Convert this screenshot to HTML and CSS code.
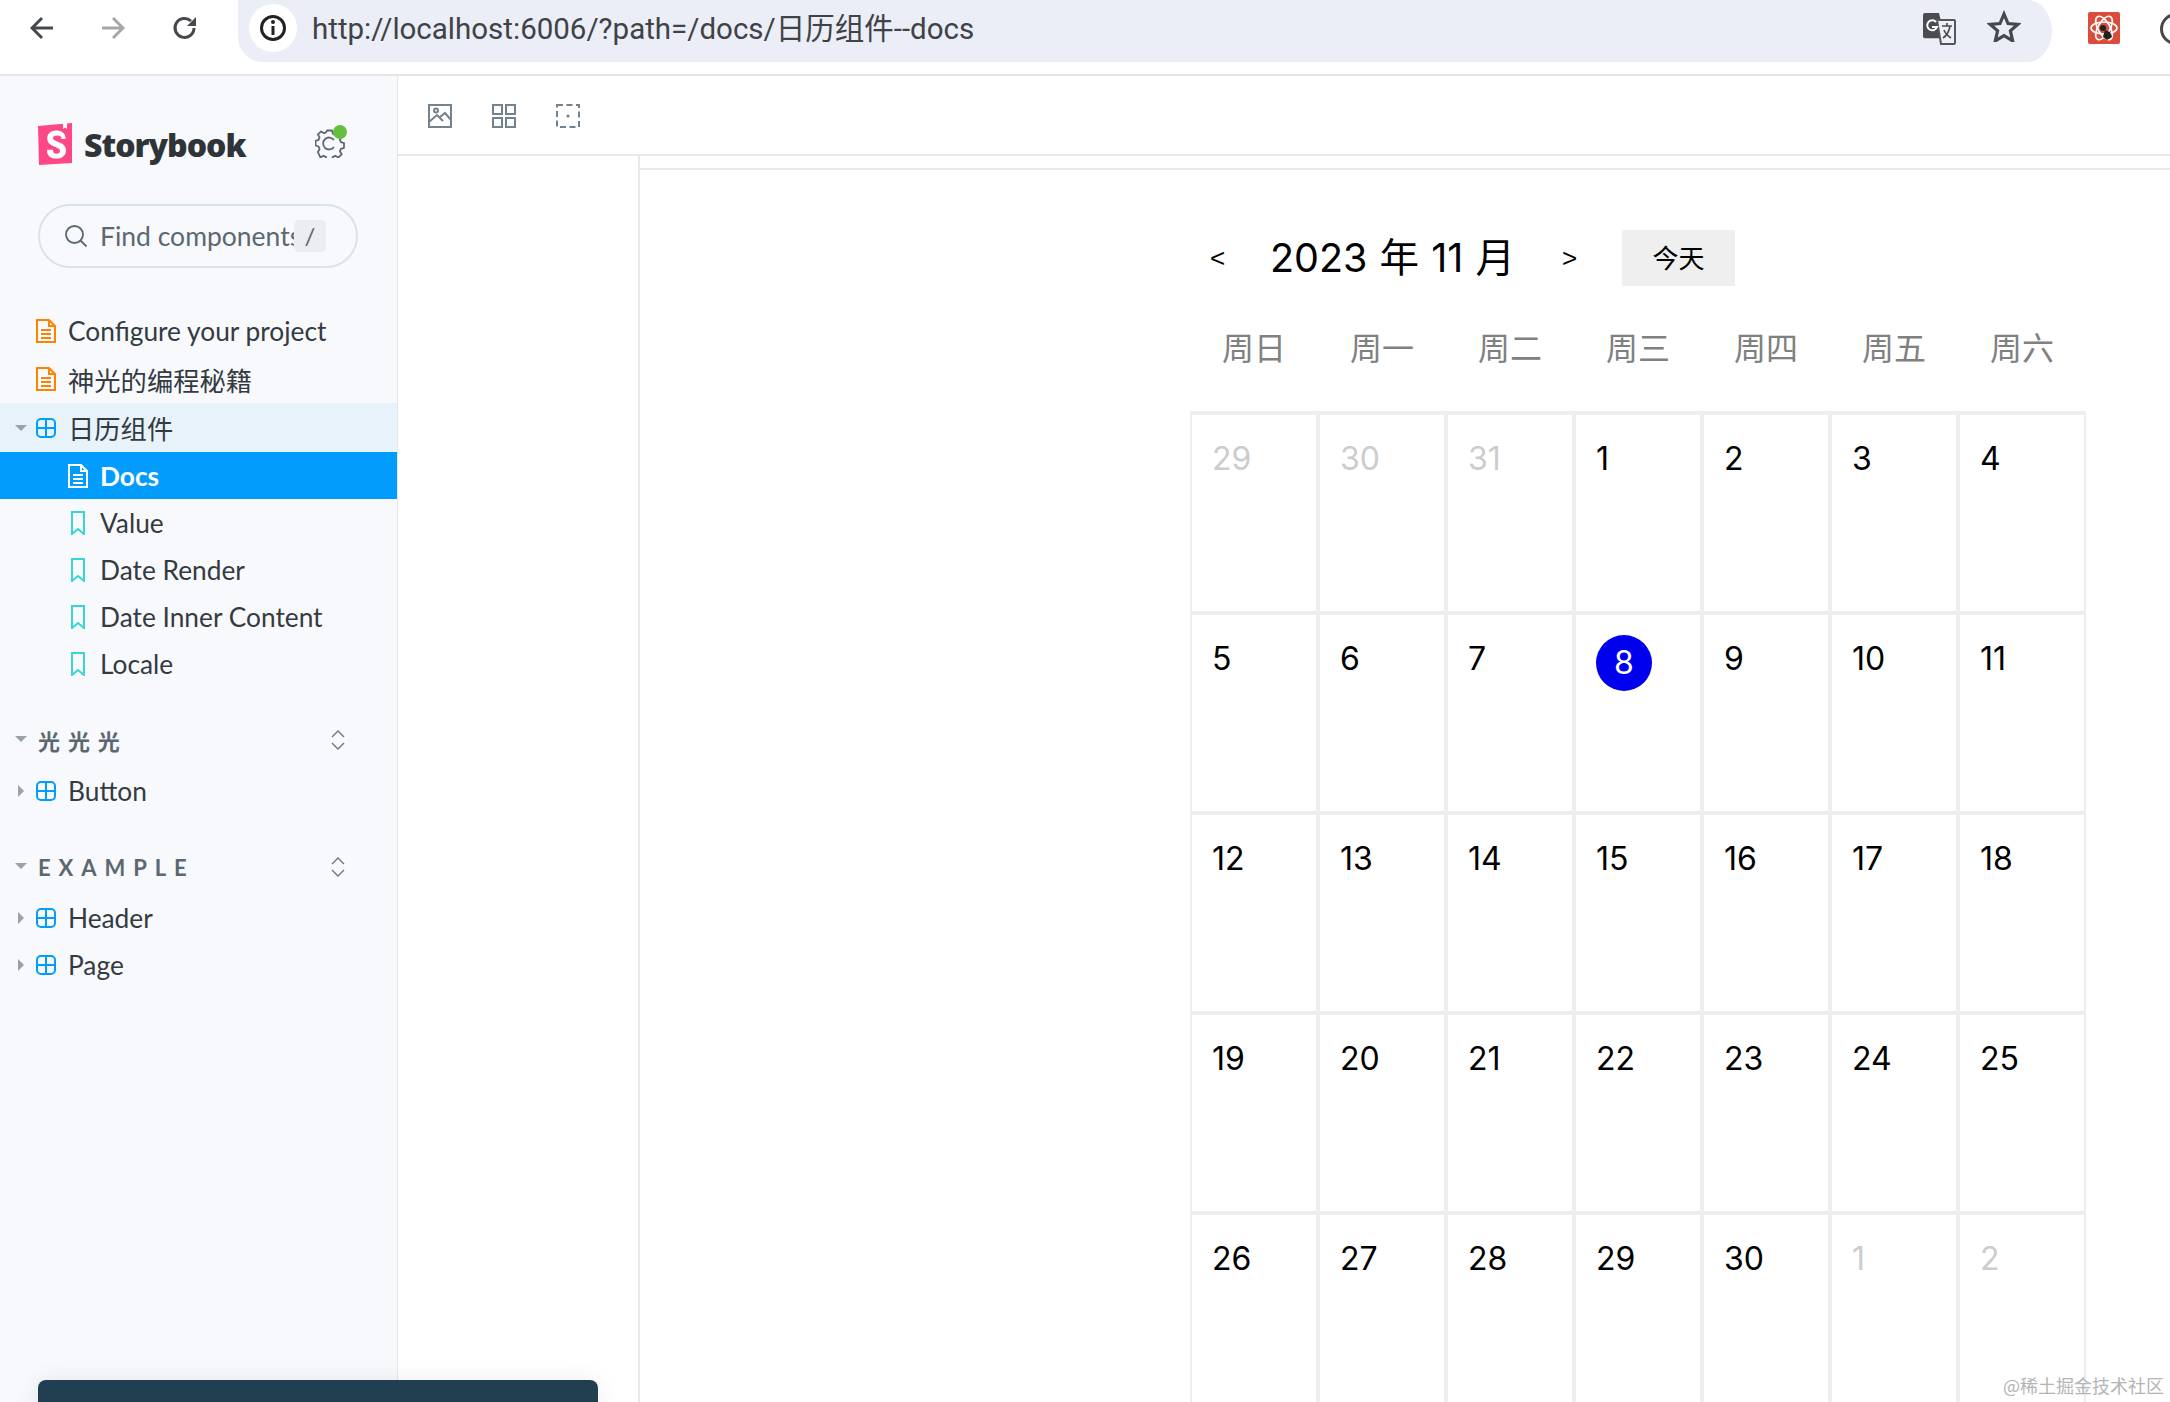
FILE: index.html
```html
<!DOCTYPE html>
<html lang="zh-CN">
<head>
  <meta charset="UTF-8">
  <title>日历组件 - Docs - Storybook</title>
  <link rel="stylesheet" href="styles.css">
</head>
<body>
  <svg class="sprites" width="0" height="0">
    <symbol id="i-doc" viewBox="0 0 20 24">
      <path d="M1 1h12l6 6v16H1z M13 1v6h6" fill="none" stroke="currentColor" stroke-width="2"/>
      <path d="M5 11h10M5 15h10M5 19h10" fill="none" stroke="currentColor" stroke-width="2"/>
    </symbol>
    <symbol id="i-component" viewBox="0 0 20 20">
      <rect x="1" y="1" width="18" height="18" rx="4" fill="none" stroke="currentColor" stroke-width="2"/>
      <path d="M10 1v18M1 10h18" fill="none" stroke="currentColor" stroke-width="2"/>
    </symbol>
    <symbol id="i-story" viewBox="0 0 14 24">
      <path d="M1 1h12v22l-6-5-6 5z" fill="none" stroke="currentColor" stroke-width="2"/>
    </symbol>
    <symbol id="i-expand" viewBox="0 0 14 20">
      <path d="M1 7l6-6 6 6M1 13l6 6 6-6" fill="none" stroke="currentColor" stroke-width="1.4"/>
    </symbol>
  </svg>

  <!-- browser chrome -->
  <header class="browser-bar">
    <svg class="nav-icon" width="24" height="24" viewBox="0 0 24 24"><path d="M23 12H3M12 2L2 12l10 10" fill="none" stroke="#45484c" stroke-width="3"/></svg>
    <svg class="nav-icon nav-off" width="24" height="24" viewBox="0 0 24 24"><path d="M1 12h20M12 2l10 10-10 10" fill="none" stroke="#a5a7aa" stroke-width="3"/></svg>
    <svg class="nav-icon" width="26" height="26" viewBox="0 0 26 26"><path d="M22 13a9.500 9.500 0 1 1-3-7" fill="none" stroke="#45484c" stroke-width="3"/><path d="M24 2v9h-9z" fill="#45484c"/></svg>
    <div class="url-pill">
      <span class="site-info">
        <svg width="28" height="28" viewBox="0 0 28 28"><circle cx="14" cy="14" r="11.500" fill="none" stroke="#222" stroke-width="3"/><path d="M14 12v9" stroke="#222" stroke-width="3"/><circle cx="14" cy="8" r="2" fill="#222"/></svg>
      </span>
      <span class="url-text">http://localhost:6006/?path=/docs/日历组件--docs</span>
      <svg class="translate-icon" width="34" height="32" viewBox="0 0 34 32">
        <path d="M1 2a2 2 0 0 1 2-2h14l6 30H3a2 2 0 0 1-2-2z" fill="#4a4c4f" transform="scale(1 .84)"/>
        <path d="M15 7h17a1 1 0 0 1 1 1v22a1 1 0 0 1-1 1H19z" fill="#eef0f5" stroke="#55585b" stroke-width="2"/>
        <path d="M14 9a5 5 0 1 0 1 5h-5" fill="none" stroke="#fff" stroke-width="2"/>
        <path d="M20 13h10M25 10v3M28 13c-1 6-4 10-7 12M22 17c1 3 4 6 7 8" fill="none" stroke="#4a4c4f" stroke-width="1.600"/>
      </svg>
      <svg class="star-icon" width="34" height="32" viewBox="0 0 34 32"><path d="M17 4l4 9.500 10 .8-7.600 6.600 2.300 10L17 25.700 8.300 30.900l2.300-10L3 14.300l10-.8z" fill="none" stroke="#45484c" stroke-width="3.200"/></svg>
    </div>
    <span class="ext-icon">
      <svg width="32" height="32" viewBox="0 0 32 32">
        <g fill="none" stroke="#fff" stroke-width="1.600"><ellipse cx="16" cy="16" rx="13" ry="6"/><ellipse cx="16" cy="16" rx="13" ry="6" transform="rotate(60 16 16)"/><ellipse cx="16" cy="16" rx="13" ry="6" transform="rotate(120 16 16)"/></g>
        <circle cx="15" cy="16" r="3" fill="#222"/><path d="M17 18l5 2 2 5-5 3-4-3z" fill="#222"/>
      </svg>
    </span>
    <span class="profile-icon"></span>
  </header>

  <div class="app">
    <aside class="sidebar">
      <div class="brand">
        <svg class="logo" width="34" height="42" viewBox="0 0 34 42">
          <path d="M0 3L34 0l0 40-33 2z" fill="#ff4785"/>
          <path d="M25 0l0 6 2-1.500 2 1.500V0z" fill="#fff"/>
          <path d="M23.500 16c0-2.500-1.500-3.600-4.500-3.600s-4 1.300-4 2.800c0 4 13 3 13 12 0 5.500-4.500 8.500-9.500 8.500-5.500 0-10-2.700-9.500-9l6 0c0 3 1.300 4 3.500 4 2.300 0 3.500-1 3.500-3 0-4.500-12.800-3.500-12.800-12.300 0-5 4-7.800 9-7.800s9.500 2.500 9.500 8.400z" fill="#fff"/>
        </svg>
        <span class="brand-name">Storybook</span>
        <span class="status">
          <svg width="30" height="30" viewBox="0 0 30 30"><path d="M12 2.500h5l1 3.500 2.500 1 3.200-1.800 3 3.500-1.800 3 1 2.500 3.100 1v4.600l-3.100 1-1 2.500 1.800 3-3.400 3.200-3-1.700-2.500 1-1 3.200h-5l-.9-3.200-2.500-1-3 1.700L2.900 24l1.700-3-1-2.500-3.100-1v-4.600l3.100-1 1-2.500-1.700-3L6.200 3.400l3 1.800 2-1z" fill="none" stroke="#5c6870" stroke-width="1.800" stroke-linejoin="round"/><path d="M19 12a6 6 0 1 0 0 7" fill="none" stroke="#5c6870" stroke-width="1.800"/></svg>
          <i class="status-dot"></i>
        </span>
      </div>

      <div class="search">
        <svg width="24" height="24" viewBox="0 0 24 24"><circle cx="10.500" cy="10.500" r="8.500" fill="none" stroke="#5c6870" stroke-width="1.800"/><path d="M16.500 16.500l6 6" stroke="#5c6870" stroke-width="1.800"/></svg>
        <span class="search-text">Find components</span>
        <kbd class="search-key">/</kbd>
      </div>

      <nav class="tree">
        <a class="row row-top"><svg class="ico ico-doc"><use href="#i-doc"/></svg>Configure your project</a>
        <a class="row row-top"><svg class="ico ico-doc"><use href="#i-doc"/></svg>神光的编程秘籍</a>
        <a class="row row-open"><i class="caret caret-down"></i><svg class="ico ico-comp"><use href="#i-component"/></svg>日历组件</a>
        <a class="row row-sub row-active"><svg class="ico ico-white"><use href="#i-doc"/></svg>Docs</a>
        <a class="row row-sub"><svg class="ico-story"><use href="#i-story"/></svg>Value</a>
        <a class="row row-sub"><svg class="ico-story"><use href="#i-story"/></svg>Date Render</a>
        <a class="row row-sub"><svg class="ico-story"><use href="#i-story"/></svg>Date Inner Content</a>
        <a class="row row-sub"><svg class="ico-story"><use href="#i-story"/></svg>Locale</a>

        <div class="group-head">
          <i class="caret caret-down"></i><span class="group-title">光光光</span>
          <svg class="expand"><use href="#i-expand"/></svg>
        </div>
        <a class="row"><i class="caret caret-right"></i><svg class="ico ico-comp"><use href="#i-component"/></svg>Button</a>

        <div class="group-head">
          <i class="caret caret-down"></i><span class="group-title">EXAMPLE</span>
          <svg class="expand"><use href="#i-expand"/></svg>
        </div>
        <a class="row"><i class="caret caret-right"></i><svg class="ico ico-comp"><use href="#i-component"/></svg>Header</a>
        <a class="row"><i class="caret caret-right"></i><svg class="ico ico-comp"><use href="#i-component"/></svg>Page</a>
      </nav>
    </aside>

    <main class="main">
      <div class="toolbar">
        <svg width="24" height="24" viewBox="0 0 24 24"><g fill="none" stroke="#73828c" stroke-width="2"><rect x="1" y="1" width="22" height="22"/><circle cx="8" cy="6.500" r="2"/><path d="M1 18l8-7 6 6M12 13l5-4 6 7"/></g></svg>
        <svg width="24" height="24" viewBox="0 0 24 24"><g fill="none" stroke="#73828c" stroke-width="2"><rect x="1" y="1" width="9" height="9"/><rect x="14" y="1" width="9" height="9"/><rect x="1" y="14" width="9" height="9"/><rect x="14" y="14" width="9" height="9"/></g></svg>
        <svg width="24" height="24" viewBox="0 0 24 24"><rect x="1" y="1" width="22" height="22" fill="none" stroke="#73828c" stroke-width="2" stroke-dasharray="6 3.500"/><circle cx="12" cy="12" r="1.600" fill="#73828c"/></svg>
      </div>

      <div class="stage">
        <div class="side-panel"></div>
        <div class="canvas">
          <div class="calendar">
            <div class="cal-header">
              <span class="cal-arrow">&lt;</span>
              <span class="cal-title">2023 年 11 月</span>
              <span class="cal-arrow">&gt;</span>
              <button class="today-btn">今天</button>
            </div>
            <div class="weekdays">
              <span>周日</span><span>周一</span><span>周二</span><span>周三</span><span>周四</span><span>周五</span><span>周六</span>
            </div>
            <div class="days">
              <div class="day off">29</div><div class="day off">30</div><div class="day off">31</div><div class="day">1</div><div class="day">2</div><div class="day">3</div><div class="day">4</div>
              <div class="day">5</div><div class="day">6</div><div class="day">7</div><div class="day"><span class="picked">8</span></div><div class="day">9</div><div class="day">10</div><div class="day">11</div>
              <div class="day">12</div><div class="day">13</div><div class="day">14</div><div class="day">15</div><div class="day">16</div><div class="day">17</div><div class="day">18</div>
              <div class="day">19</div><div class="day">20</div><div class="day">21</div><div class="day">22</div><div class="day">23</div><div class="day">24</div><div class="day">25</div>
              <div class="day">26</div><div class="day">27</div><div class="day">28</div><div class="day">29</div><div class="day">30</div><div class="day off">1</div><div class="day off">2</div>
            </div>
          </div>
        </div>
      </div>
    </main>
  </div>

  <div class="toast"></div>
  <div class="watermark">@稀土掘金技术社区</div>
</body>
</html>
```

FILE: styles.css
```css
* {
  margin: 0;
  padding: 0;
  box-sizing: border-box;
}
html, body {
  height: 1402px;
  overflow: hidden;
}
body {
  position: relative;
  display: flex;
  flex-direction: column;
  background: #fff;
  font-family: 'Lato', 'Noto Sans CJK SC', sans-serif;
}
.sprites {
  position: absolute;
}

/* Browser bar */
.browser-bar {
  height: 76px;
  flex-shrink: 0;
  display: flex;
  align-items: flex-start;
  border-bottom: 2px solid #e3e4e6;
  padding-left: 30px;
  overflow: hidden;
}
.nav-icon {
  flex-shrink: 0;
  margin-top: 16px;
  margin-right: 47px;
}
.nav-icon:nth-child(3) {
  margin-right: 40px;
  margin-top: 15px;
}
.url-pill {
  width: 1814px;
  height: 62px;
  margin-right: 36px;
  flex-shrink: 0;
  display: flex;
  align-items: center;
  background: #ebeef6;
  border-radius: 0 40px 40px 0 / 0 50px 50px 0;
  border-bottom-left-radius: 40px;
  padding-left: 11px;
}
.site-info {
  width: 48px;
  height: 48px;
  border-radius: 50%;
  background: #fff;
  display: flex;
  align-items: center;
  justify-content: center;
  margin-top: -6px;
}
.url-text {
  margin-left: 15px;
  margin-top: -11px;
  font-family: 'Roboto', 'Noto Sans CJK SC', sans-serif;
  font-size: 29.500px;
  color: #3f4246;
  white-space: nowrap;
}
.translate-icon {
  margin-left: auto;
  margin-top: -5px;
}
.star-icon {
  margin-left: 31px;
  margin-right: 31px;
  margin-top: -10px;
}
.ext-icon {
  width: 32px;
  height: 32px;
  margin-top: 12px;
  flex-shrink: 0;
  background: #db4d3a;
  border-radius: 2px;
}
.profile-icon {
  width: 32px;
  height: 32px;
  margin-top: 13px;
  margin-left: 40px;
  flex-shrink: 0;
  border: 3px solid #45484c;
  border-radius: 50%;
}

/* Layout */
.app {
  flex: 1;
  display: flex;
  min-height: 0;
}
.sidebar {
  width: 398px;
  flex-shrink: 0;
  background: #f7f9fd;
  border-right: 1px solid #e4e8ec;
  padding-top: 47px;
}

/* Sidebar brand */
.brand {
  display: flex;
  align-items: center;
  height: 42px;
  padding-left: 38px;
}
.brand-name {
  margin-left: 12px;
  font-family: 'Open Sans', sans-serif;
  font-size: 32px;
  font-weight: 800;
  letter-spacing: -1px;
  color: #2e3438;
}
.status {
  position: relative;
  display: flex;
  margin-left: auto;
  margin-right: 52px;
  margin-top: -2px;
}
.status-dot {
  position: absolute;
  top: -3px;
  right: -2px;
  width: 14px;
  height: 14px;
  border-radius: 50%;
  background: #66bf3c;
}

/* Search */
.search {
  display: flex;
  align-items: center;
  width: 320px;
  height: 64px;
  margin: 39px 0 0 38px;
  padding: 0 30px 0 24px;
  border: 2px solid #d9e3ec;
  border-radius: 32px;
}
.search-text {
  width: 194px;
  margin-left: 12px;
  flex-shrink: 0;
  overflow: hidden;
  white-space: nowrap;
  font-size: 26.500px;
  color: #5c6870;
}
.search-key {
  width: 32px;
  height: 32px;
  flex-shrink: 0;
  background: #ecedf0;
  border-radius: 5px;
  font-family: 'Lato', sans-serif;
  font-size: 24px;
  line-height: 32px;
  text-align: center;
  color: #5c6870;
}

/* Tree */
.tree {
  margin-top: 39px;
}
.row {
  position: relative;
  display: flex;
  align-items: center;
  height: 47px;
  padding-left: 36px;
  font-size: 26.300px;
  color: #343b40;
}
.row-top {
  height: 48px;
}
.row-open {
  height: 49px;
  background: #e7f2fb;
}
.row-sub {
  padding-left: 71px;
}
.row-active {
  background: #029cfd;
  color: #fff;
  font-weight: 700;
}
.ico {
  width: 20px;
  height: 24px;
  margin-right: 12px;
  flex-shrink: 0;
}
.ico-doc {
  color: #ff8300;
}
.ico-comp {
  height: 20px;
  color: #029cfd;
}
.ico-white {
  margin-left: -3px;
  margin-right: 12px;
  color: #fff;
}
.ico-story {
  width: 14px;
  height: 24px;
  margin-right: 15px;
  color: #37d5d3;
  flex-shrink: 0;
}
.caret {
  position: absolute;
  width: 0;
  height: 0;
}
.caret-down {
  left: 15px;
  border-left: 6px solid transparent;
  border-right: 6px solid transparent;
  border-top: 6px solid #9aa2a9;
}
.caret-right {
  left: 18px;
  border-top: 6px solid transparent;
  border-bottom: 6px solid transparent;
  border-left: 6px solid #9aa2a9;
}
.group-head {
  position: relative;
  display: flex;
  align-items: center;
  height: 30px;
  padding-left: 38px;
  margin-top: 38px;
  margin-bottom: 12px;
}
.group-head .caret-down {
  top: 11px;
}
.group-title {
  font-size: 22px;
  font-weight: 700;
  letter-spacing: 0.36em;
  color: #5c6870;
  white-space: nowrap;
}
.expand {
  position: absolute;
  left: 331px;
  top: 5px;
  width: 14px;
  height: 20px;
  color: #6d767d;
}

/* Main */
.main {
  flex: 1;
  min-width: 0;
  display: flex;
  flex-direction: column;
}
.toolbar {
  height: 80px;
  flex-shrink: 0;
  display: flex;
  align-items: center;
  gap: 40px;
  padding: 2px 0 0 30px;
  border-bottom: 2px solid #e4e9ed;
}
.stage {
  flex: 1;
  min-height: 0;
  display: flex;
}
.side-panel {
  width: 242px;
  flex-shrink: 0;
  border-right: 2px solid #e4e9ed;
}
.canvas {
  flex: 1;
  min-width: 0;
  overflow: hidden;
}
.canvas::before {
  content: "";
  display: block;
  height: 12px;
  border-bottom: 2px solid #e4e9ed;
}

/* Calendar */
.calendar {
  width: 896px;
  margin-left: 550px;
  padding-top: 60px;
}
.cal-header {
  display: flex;
  align-items: center;
  height: 56px;
  padding-left: 20px;
  font-family: 'Liberation Sans', 'Noto Sans CJK SC', sans-serif;
}
.cal-arrow {
  width: 15px;
  font-size: 26px;
  line-height: 1;
  color: #000;
}
.cal-title {
  width: 292px;
  margin-left: 45px;
  padding-bottom: 8px;
  font-family: 'Inter', 'Noto Sans CJK SC', sans-serif;
  font-size: 39.500px;
  word-spacing: 1px;
  color: #000;
  white-space: nowrap;
}
.today-btn {
  width: 113px;
  height: 56px;
  margin-left: 45px;
  padding-bottom: 3px;
  border: none;
  background: #efefef;
  font-family: 'Noto Sans CJK SC', sans-serif;
  font-size: 26px;
  color: #000;
}
.weekdays {
  display: grid;
  grid-template-columns: repeat(7, 128px);
  height: 125px;
  padding-top: 36px;
  font-family: 'Noto Sans CJK SC', sans-serif;
  font-size: 32px;
  line-height: 48px;
  text-align: center;
  color: #808080;
}
.days {
  display: grid;
  grid-template-columns: repeat(7, 128px);
  grid-auto-rows: 200px;
  border-top: 2px solid #eee;
  font-family: 'Inter', sans-serif;
  font-size: 32px;
  line-height: 48px;
  color: #000;
}
.day {
  border: 2px solid #eee;
  padding: 20px;
}
.off {
  color: #ccc;
}
.picked {
  display: block;
  width: 56px;
  height: 56px;
  border-radius: 50%;
  background: #0000ee;
  color: #fff;
  line-height: 56px;
  text-align: center;
}

/* Overlays */
.toast {
  position: absolute;
  left: 38px;
  top: 1380px;
  width: 560px;
  height: 60px;
  background: #223f52;
  border-radius: 8px;
  box-shadow: 0 0 24px rgba(0, 0, 0, 0.08);
}
.watermark {
  position: absolute;
  right: 6px;
  top: 1372px;
  font-family: 'Noto Sans CJK SC', sans-serif;
  font-size: 18px;
  color: #b4b4b4;
  white-space: nowrap;
}
```
